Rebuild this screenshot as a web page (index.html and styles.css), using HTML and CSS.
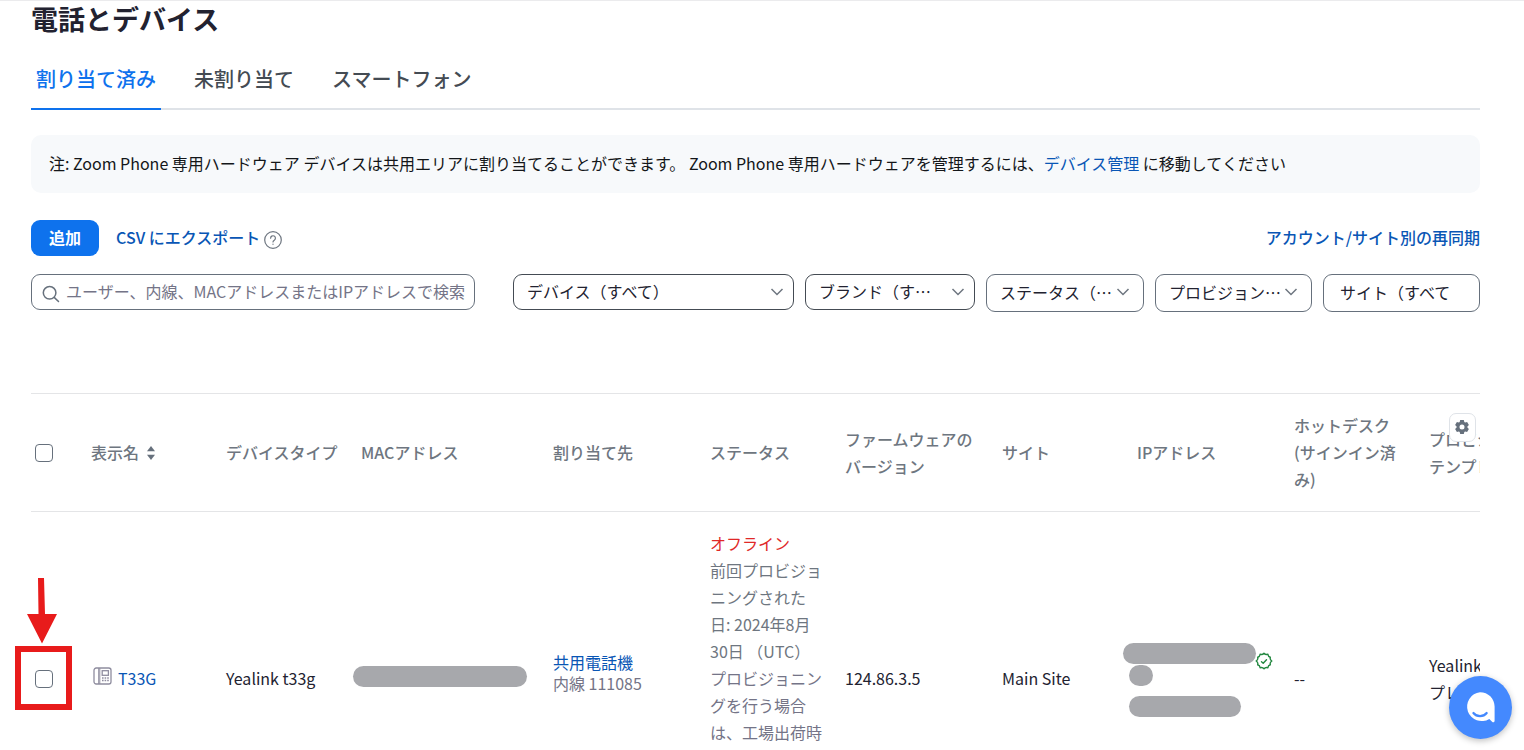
FILE: index.html
```html
<!DOCTYPE html>
<html lang="ja">
<head>
<meta charset="utf-8">
<title>電話とデバイス</title>
<link rel="stylesheet" href="styles.css">
</head>
<body>
<main class="page">
  <h1 class="title">電話とデバイス</h1>

  <nav class="tabs">
    <a class="tab tab-active" href="#assigned">割り当て済み</a>
    <a class="tab" href="#unassigned">未割り当て</a>
    <a class="tab" href="#smartphone">スマートフォン</a>
  </nav>

  <p class="note">注: Zoom Phone 専用ハードウェア デバイスは共用エリアに割り当てることができます。 Zoom Phone 専用ハードウェアを管理するには、<a class="link" href="#devices">デバイス管理</a> に移動してください</p>

  <div class="toolbar">
    <button class="button-primary" type="button">追加</button>
    <a class="link link-strong" href="#export">CSV にエクスポート</a>
    <button class="help" type="button" aria-label="ヘルプ">
      <svg width="18" height="18" viewBox="0 0 18 18" fill="none" stroke="#6e7680" stroke-width="1.2" stroke-linecap="round"><circle cx="9" cy="9" r="8.3"/><path d="M6.6 7.2a2.4 2.4 0 1 1 3.7 2c-.9.6-1.3.9-1.3 1.7"/><path d="M9 13.1v.2"/></svg>
    </button>
    <a class="link link-strong toolbar-end" href="#resync">アカウント/サイト別の再同期</a>
  </div>

  <form class="filters">
    <div class="search">
      <svg class="search-icon" width="18" height="18" viewBox="0 0 18 18" fill="none" stroke="#66707c" stroke-width="1.5" stroke-linecap="round"><circle cx="7.6" cy="7.8" r="6.3"/><path d="M12.2 12.4l4.3 4.1"/></svg>
      <input class="search-input" type="text" aria-label="検索" placeholder="ユーザー、内線、MACアドレスまたはIPアドレスで検索">
    </div>
    <div class="filter">
      <select class="select select-dark" aria-label="デバイス"><option>デバイス（すべて）</option></select>
      <svg class="chevron" width="14" height="8" viewBox="0 0 14 8"><path d="M1.5 1l5.5 5.5L12.500 1"/></svg>
    </div>
    <div class="filter">
      <select class="select select-dark" aria-label="ブランド"><option>ブランド（す…</option></select>
      <svg class="chevron" width="14" height="8" viewBox="0 0 14 8"><path d="M1.5 1l5.5 5.5L12.500 1"/></svg>
    </div>
    <div class="filter">
      <select class="select select-tall" aria-label="ステータス"><option>ステータス（…</option></select>
      <svg class="chevron chevron-inset" width="14" height="8" viewBox="0 0 14 8"><path d="M1.5 1l5.5 5.5L12.500 1"/></svg>
    </div>
    <div class="filter">
      <select class="select select-tall" aria-label="プロビジョニング"><option>プロビジョン…</option></select>
      <svg class="chevron chevron-inset" width="14" height="8" viewBox="0 0 14 8"><path d="M1.5 1l5.5 5.5L12.500 1"/></svg>
    </div>
    <div class="filter">
      <select class="select select-tall select-site" aria-label="サイト"><option>サイト（すべて</option></select>
    </div>
  </form>

  <div class="table-area">
    <div class="table-clip">
      <table class="devices">
        <colgroup>
          <col class="col-check"><col class="col-s"><col class="col-s"><col class="col-l"><col class="col-m"><col class="col-s"><col class="col-m"><col class="col-s"><col class="col-m"><col class="col-s"><col class="col-s">
        </colgroup>
        <thead>
          <tr>
            <th class="check-cell"><input class="checkbox" type="checkbox" aria-label="すべて選択"></th>
            <th><span class="sortable">表示名
              <svg width="8" height="14" viewBox="0 0 8 14" fill="#66707c"><path d="M4 0l4 5.300H0z"/><path d="M4 14l4-5.300H0z"/></svg></span></th>
            <th>デバイスタイプ</th>
            <th>MACアドレス</th>
            <th>割り当て先</th>
            <th>ステータス</th>
            <th>ファームウェアのバージョン</th>
            <th>サイト</th>
            <th>IPアドレス</th>
            <th>ホットデスク<br>(サインイン済み)</th>
            <th class="nowrap">プロビジョニング<br>テンプレート</th>
          </tr>
        </thead>
        <tbody>
          <tr class="device-row">
            <td class="check-cell"><input class="checkbox" type="checkbox" aria-label="T33G を選択"></td>
            <td><span class="device-name">
              <svg class="phone-icon" width="20" height="18" viewBox="0 0 20 18" fill="none" stroke="#8f8d9f" stroke-width="1.3"><rect x="1" y="1" width="17" height="16" rx="2.200"/><path d="M5.700 1v16M6.800 1v16" stroke-width="1"/><rect x="9.200" y="3.700" width="6.200" height="4.600"/><path d="M9 11h1.600M11.600 11h1.600M14.200 11h1.600M9 13.500h1.600M11.600 13.500h1.600M14.200 13.500h1.600" stroke-width="1.500"/></svg>
              <a class="link" href="#t33g">T33G</a></span></td>
            <td>Yealink t33g</td>
            <td class="redacted-cell"><div class="redacted redacted-mac"></div></td>
            <td><div class="assignee"><a class="link" href="#area">共用電話機</a><span class="muted">内線 111085</span></div></td>
            <td class="status-cell"><div class="offline">オフライン</div><div class="provision">前回プロビジョニングされた<br>日: 2024年8月<br>30日 （UTC）</div><div class="muted">プロビジョニングを行う場合<br>は、工場出荷時</div></td>
            <td>124.86.3.5</td>
            <td>Main Site</td>
            <td class="redacted-cell">
              <div class="ip-list">
                <div class="redacted redacted-wide">
                  <svg class="verified" width="18" height="18" viewBox="0 0 18 18" fill="none" stroke="#22873f" stroke-width="1.400" stroke-linejoin="round" stroke-linecap="round"><path d="M9 1.200Q10.300 2.900 12.900 2.300Q13.100 4.700 15.300 5.200Q14.600 7.500 16.800 9Q14.600 10.500 15.300 12.800Q13.100 13.300 12.900 15.700Q10.300 15.100 9 16.800Q7.700 15.100 5.100 15.700Q4.900 13.300 2.700 12.800Q3.400 10.500 1.200 9Q3.400 7.500 2.700 5.200Q4.900 4.700 5.100 2.300Q7.700 2.900 9 1.200z"/><path d="M6.500 9.700l1.700 1.500 3.300-3.500"/></svg>
                </div>
                <div class="redacted redacted-dot"></div>
                <div class="redacted redacted-mid"></div>
              </div>
            </td>
            <td>--</td>
            <td class="nowrap">Yealink<br>プレート</td>
          </tr>
        </tbody>
      </table>
    </div>
    <button class="settings" type="button" aria-label="列の設定">
      <svg width="16" height="16" viewBox="0 0 16 16"><path fill="#66707c" fill-rule="evenodd" d="M6.200 1h3.600l.5 2 .8.500 2-.600 1.800 3.100-1.500 1.500v1l1.500 1.500-1.800 3.100-2-.600-.8.500-.5 2H6.200l-.5-2-.8-.5-2 .600L1.100 10l1.500-1.500v-1L1.100 6l1.800-3.100 2 .600.8-.5zM8 5.500a2.500 2.500 0 1 0 0 5 2.500 2.500 0 0 0 0-5z"/></svg>
    </button>
  </div>

  <svg class="callout" width="58" height="133" viewBox="0 0 58 133"><path fill="#e81b1b" d="M23 0h6l1 36h12L27 65.500 12 36h11.500z"/><path fill="none" stroke="#e81b1b" stroke-width="6" d="M3 71h51v58H3z"/></svg>
</main>

<button class="chat" type="button" aria-label="チャット">
  <svg width="63" height="63" viewBox="0 0 63 63"><path fill="#fff" d="M31 16.200c8.200 0 14.600 6.200 14.600 14.400v14.200c0 1.500-1.500 2-2.500 1l-2.800-2.900A14.500 14.500 0 1 1 31 16.200z"/><path fill="none" stroke="#4489fe" stroke-width="2.200" stroke-linecap="round" d="M24.400 37c3.300 4.200 10 4.200 13.300 0"/></svg>
</button>
</body>
</html>
```
FILE: styles.css
```css
* {
  box-sizing: border-box;
}

body {
  height: 100vh;
  margin: 0;
  overflow: hidden;
  background: #fff;
  color: #222230;
  font-family: "Noto Sans CJK JP", "Noto Sans", sans-serif;
  font-size: 16px;
  line-height: 27px;
}

button,
input,
select {
  font: inherit;
  color: inherit;
}

.page {
  position: relative;
  padding: 0 44px 0 31px;
  border-top: 1px solid #ebebed;
}

.title {
  margin: 0;
  font-size: 27px;
  font-weight: 700;
  line-height: 36px;
}

.tabs {
  display: flex;
  gap: 28px;
  margin-top: 12px;
  border-bottom: 2px solid #dfe3e8;
}

.tab {
  margin-bottom: -2px;
  padding: 16px 5px 15px;
  border-bottom: 2px solid transparent;
  color: #444b53;
  font-size: 20px;
  font-weight: 500;
  line-height: 28px;
  text-decoration: none;
}

.tab-active {
  border-color: #0e72ed;
  color: #0e72ed;
}

.note {
  margin: 25px 0 27px;
  padding: 15px 18px 16px;
  border-radius: 10px;
  background: #f7f9fb;
  color: #131619;
}

.link {
  color: #0956b5;
  text-decoration: none;
}

.link-strong {
  padding-bottom: 2px;
  font-weight: 500;
}

.toolbar {
  display: flex;
  align-items: center;
}

.button-primary {
  height: 36px;
  margin-right: 17px;
  padding: 0 18px 1px;
  border: 0;
  border-radius: 9px;
  background: #0e72ed;
  color: #fff;
  font-weight: 700;
}

.help {
  display: flex;
  margin-left: 4px;
  padding: 4px 0 0;
  border: 0;
  background: none;
}

.toolbar-end {
  margin-left: auto;
}

.filters {
  display: grid;
  grid-template-columns: 471fr 281fr 170fr 158fr 157fr 157fr;
  align-items: start;
  gap: 11px;
  margin-top: 18px;
}

.search {
  display: flex;
  align-items: center;
  gap: 6px;
  height: 36px;
  margin-right: 27px;
  padding: 0 9px 0 10px;
  border: 1px solid #66707c;
  border-radius: 9px;
}

.search-icon {
  flex: none;
  margin-top: 3px;
}

.search-input {
  flex: 1;
  min-width: 0;
  padding: 0 0 2px;
  border: 0;
  outline: 0;
  background: none;
}

.search-input::placeholder {
  color: #747487;
}

.filter {
  position: relative;
  min-width: 0;
}

.select {
  display: block;
  width: 100%;
  height: 36px;
  padding: 0 0 2px 13px;
  border: 1px solid #66707c;
  border-radius: 9px;
  background: #fff;
  appearance: none;
}

.select-dark {
  border-color: #444b53;
}

.select-tall {
  height: 38px;
}

.select-site {
  padding-left: 16px;
}

.chevron {
  position: absolute;
  top: 14px;
  right: 10px;
  fill: none;
  stroke: #6e7680;
  stroke-width: 1.5;
  pointer-events: none;
}

.chevron-inset {
  right: 14px;
}

.table-area {
  position: relative;
  margin-top: 81px;
}

.table-clip {
  overflow: hidden;
}

.devices {
  width: 1525px;
  border-collapse: collapse;
  border-top: 1px solid #e4e5e7;
  table-layout: fixed;
}

.col-check {
  width: 52px;
}

.col-s {
  width: 135px;
}

.col-m {
  width: 157px;
}

.col-l {
  width: 192px;
}

.devices th,
.devices td {
  padding: 18px 12px 18px 8px;
  text-align: left;
  vertical-align: middle;
}

.devices th {
  border-bottom: 1px solid #e4e5e7;
  color: #6e7680;
  font-weight: 500;
}

.devices .check-cell {
  padding: 0 4px;
}

.checkbox {
  display: block;
  width: 18px;
  height: 18px;
  margin: 0;
  border: 1px solid #66707c;
  border-radius: 4px;
  background: #fff;
  appearance: none;
}

.sortable,
.device-name {
  display: flex;
  align-items: center;
}

.sortable {
  gap: 8px;
}

.device-name {
  gap: 5px;
}

.phone-icon {
  margin: 0 0 6px 2px;
}

.nowrap {
  white-space: nowrap;
}

.device-row {
  height: 334px;
}

.assignee {
  display: flex;
  flex-direction: column;
  padding-bottom: 12px;
  line-height: 21px;
}

.muted {
  color: #747487;
}

.devices .status-cell {
  vertical-align: top;
}

.offline {
  color: #e02828;
}

.provision {
  color: #6e7680;
}

.devices .redacted-cell {
  padding: 0;
}

.redacted {
  position: relative;
  height: 21px;
  border-radius: 11px;
  background: #a7a8ac;
}

.redacted-mac {
  width: 174px;
  margin-top: -4px;
}

.ip-list {
  display: flex;
  flex-direction: column;
  gap: 1px;
  padding-top: 2px;
}

.redacted-wide {
  width: 133px;
  margin-left: -6px;
}

.redacted-dot {
  width: 24px;
}

.redacted-mid {
  width: 112px;
  margin-top: 9px;
}

.verified {
  position: absolute;
  top: 9px;
  left: 132px;
}

.settings {
  position: absolute;
  top: 20px;
  right: 4px;
  display: flex;
  align-items: center;
  justify-content: center;
  width: 27px;
  height: 29px;
  padding: 0 1px 2px 0;
  border: 1px solid #dfe3e8;
  border-radius: 7px;
  background: #fff;
}

.callout {
  position: absolute;
  top: 577px;
  left: 15px;
  pointer-events: none;
}

.chat {
  position: fixed;
  right: 12px;
  bottom: 11px;
  width: 63px;
  height: 63px;
  padding: 0;
  border: 0;
  border-radius: 50%;
  background: #4489fe;
  box-shadow: 0 2px 6px rgba(0, 0, 0, 0.25);
}
```
